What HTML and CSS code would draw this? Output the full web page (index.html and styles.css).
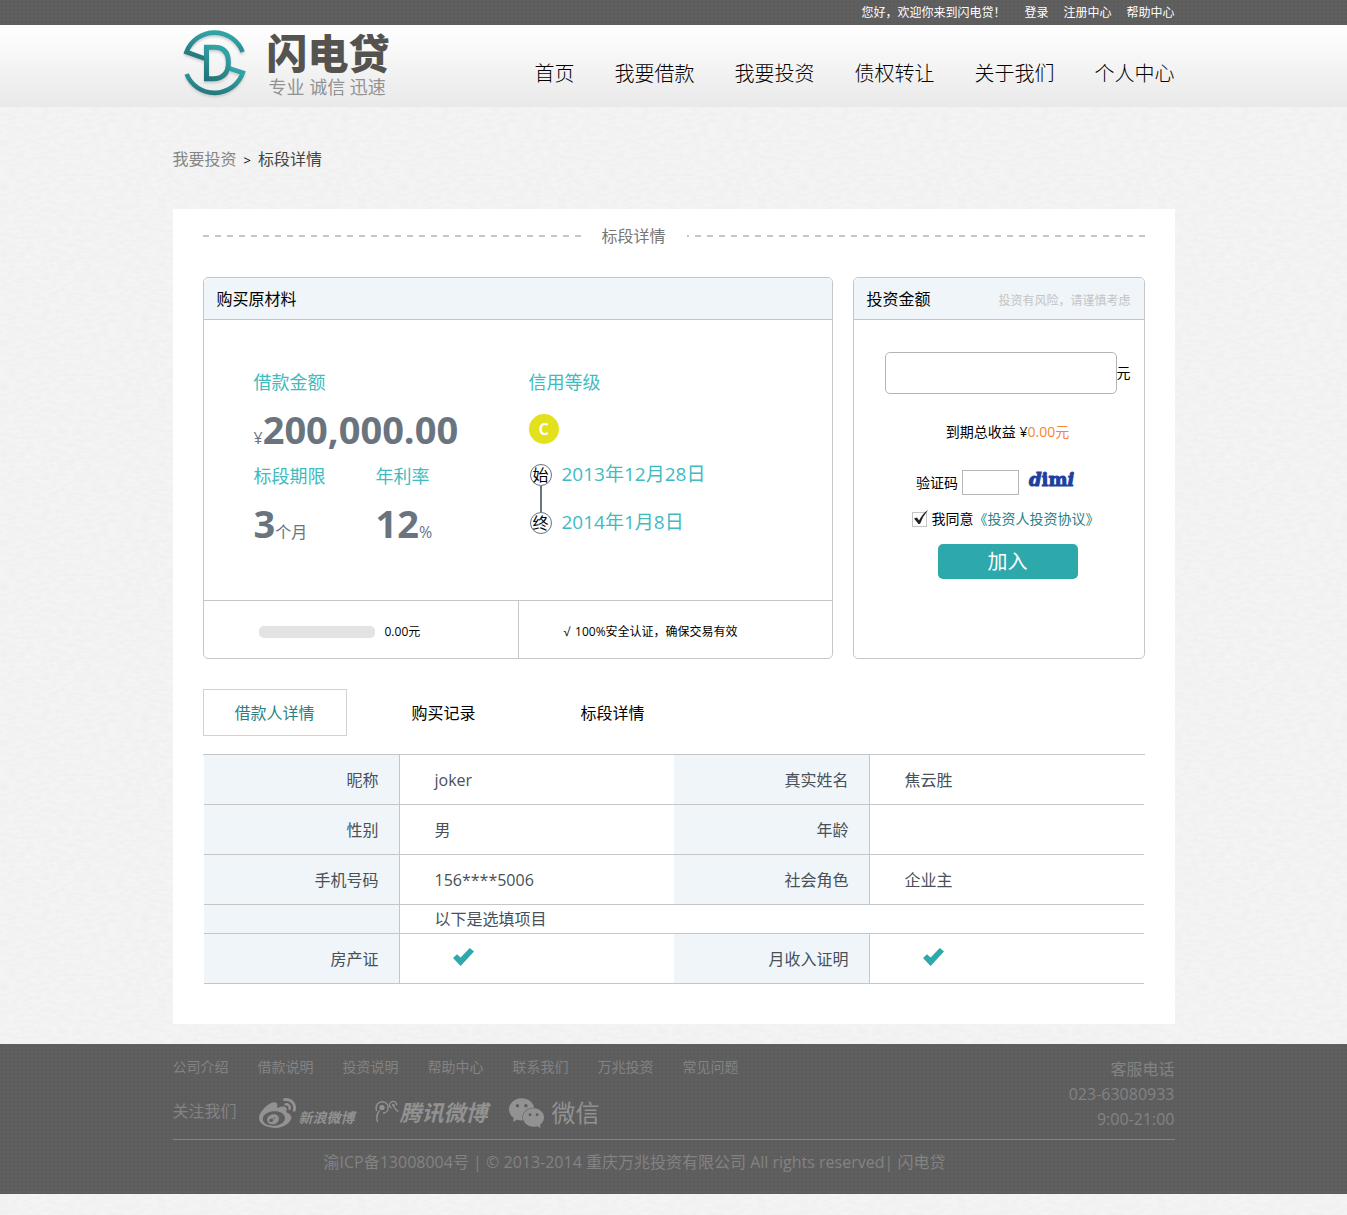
FILE: index.html
```html
<!DOCTYPE html>
<html lang="zh-CN">
<head>
<meta charset="utf-8">
<meta name="viewport" content="width=device-width, initial-scale=1">
<title>标段详情 - 闪电贷</title>
<link rel="stylesheet" href="styles.css">
</head>
<body>
<div class="topbar">
  <div class="container topbar-inner">
    <span class="greeting">您好，欢迎你来到闪电贷！</span>
    <a href="#">登录</a>
    <a href="#">注册中心</a>
    <a href="#">帮助中心</a>
  </div>
</div>

<header class="header">
  <div class="container header-inner">
    <a class="logo" href="#">
      <svg class="logo-mark" width="68" height="72" viewBox="0 0 68 72" aria-hidden="true">
        <defs>
          <linearGradient id="teal" x1="0" y1="1" x2="0.4" y2="0">
            <stop offset="0" stop-color="#237478"/>
            <stop offset="1" stop-color="#31a3a6"/>
          </linearGradient>
        </defs>
        <g fill="none" stroke="url(#teal)" stroke-width="4.6">
          <path d="M23 29.600 L4.500 23 A30 30 0 0 1 60.600 23"/>
          <path d="M46 39 L60.800 43.800 A30 30 0 0 1 4.600 45"/>
          <path d="M24.500 18.300 H32 C42 18.300 46.400 24 46.400 33.500 C46.400 44 41 49.800 31 49.800 H24.500 Z" stroke-width="5"/>
        </g>
      </svg>
      <span class="logo-text">
        <strong>闪电贷</strong>
        <span>专业 诚信 迅速</span>
      </span>
    </a>
    <nav class="nav">
      <a href="#">首页</a>
      <a href="#">我要借款</a>
      <a href="#">我要投资</a>
      <a href="#">债权转让</a>
      <a href="#">关于我们</a>
      <a href="#">个人中心</a>
    </nav>
  </div>
</header>

<main class="container">
  <div class="breadcrumb">
    <a href="#">我要投资</a><span class="sep">&gt;</span><span>标段详情</span>
  </div>

  <section class="panel">
    <h1 class="panel-title"><span>标段详情</span></h1>

    <div class="cards">
      <section class="card">
        <h2 class="card-head">购买原材料</h2>
        <div class="loan">
          <div class="loan-figures">
            <div class="figure wide">
              <div class="label">借款金额</div>
              <div class="value">¥<b>200,000.00</b></div>
            </div>
            <div class="figure">
              <div class="label">标段期限</div>
              <div class="value"><b>3</b>个月</div>
            </div>
            <div class="figure">
              <div class="label">年利率</div>
              <div class="value"><b>12</b>%</div>
            </div>
          </div>
          <div class="loan-credit">
            <div class="label">信用等级</div>
            <div class="grade-row"><span class="grade">C</span></div>
            <ol class="timeline">
              <li><span class="dot">始</span><span class="date">2013年12月28日</span></li>
              <li><span class="dot">终</span><span class="date">2014年1月8日</span></li>
            </ol>
          </div>
        </div>
        <div class="card-foot">
          <div class="foot-cell"><span class="bar"></span><span>0.00元</span></div>
          <div class="foot-cell safe"><span>√</span><span>100%安全认证，确保交易有效</span></div>
        </div>
      </section>

      <section class="card">
        <h2 class="card-head">投资金额<small>投资有风险，请谨慎考虑</small></h2>
        <form class="invest">
          <div class="amount-row">
            <input class="amount" id="amount" type="text" aria-label="投资金额"><label for="amount">元</label>
          </div>
          <p class="income">到期总收益 ¥<em>0.00元</em></p>
          <div class="code-row">
            <label for="code">验证码</label>
            <input class="code" id="code" type="text">
            <span class="captcha"><i>d</i>im<i>i</i></span>
          </div>
          <div class="agree-row">
            <input id="agree" type="checkbox" checked>
            <label for="agree">我同意<a href="#">《投资人投资协议》</a></label>
          </div>
          <button class="join" type="button">加入</button>
        </form>
      </section>
    </div>

    <div class="tabs">
      <button class="tab active" type="button">借款人详情</button>
      <button class="tab" type="button">购买记录</button>
      <button class="tab" type="button">标段详情</button>
    </div>

    <div class="details">
      <table>
        <tr><th scope="row">昵称</th><td>joker</td><th scope="row">真实姓名</th><td>焦云胜</td></tr>
        <tr><th scope="row">性别</th><td>男</td><th scope="row">年龄</th><td></td></tr>
        <tr><th scope="row">手机号码</th><td>156****5006</td><th scope="row">社会角色</th><td>企业主</td></tr>
        <tr class="note"><th></th><td colspan="3">以下是选填项目</td></tr>
        <tr>
          <th scope="row">房产证</th>
          <td class="tick"><svg width="21" height="18" viewBox="0 0 21 18" role="img" aria-label="已提供"><path d="M0 10 L4 6.200 L7.600 9.400 L16.800 0 L21 3.600 L7.600 18 Z"/></svg></td>
          <th scope="row">月收入证明</th>
          <td class="tick"><svg width="21" height="18" viewBox="0 0 21 18" role="img" aria-label="已提供"><path d="M0 10 L4 6.200 L7.600 9.400 L16.800 0 L21 3.600 L7.600 18 Z"/></svg></td>
        </tr>
      </table>
    </div>
  </section>
</main>

<footer class="footer">
  <div class="container">
    <div class="footer-main">
      <div>
        <nav class="footer-links">
          <a href="#">公司介绍</a>
          <a href="#">借款说明</a>
          <a href="#">投资说明</a>
          <a href="#">帮助中心</a>
          <a href="#">联系我们</a>
          <a href="#">万兆投资</a>
          <a href="#">常见问题</a>
        </nav>
        <div class="follow">
          <span class="follow-label">关注我们</span>
          <a class="sina" href="#">
            <svg width="37" height="30" viewBox="0 2.200 24 19.600" preserveAspectRatio="none" aria-hidden="true"><path d="M10.098 20.323c-3.977.391-7.414-1.406-7.672-4.020-.259-2.609 2.759-5.047 6.740-5.441 3.979-.394 7.413 1.404 7.671 4.018.259 2.600-2.759 5.049-6.737 5.439l-.002.004zM9.050 17.219c-.384.616-1.208.884-1.829.602-.612-.279-.793-.991-.406-1.593.379-.595 1.176-.861 1.793-.601.622.263.820.972.442 1.592zm1.270-1.627c-.141.237-.449.353-.689.253-.236-.090-.313-.361-.177-.586.138-.227.436-.346.672-.240.239.090.315.360.180.601l.014-.028zm.176-2.719c-1.893-.493-4.033.450-4.857 2.118-.836 1.704-.026 3.591 1.886 4.210 1.983.640 4.318-.341 5.132-2.179.800-1.793-.201-3.642-2.161-4.149zm7.563-1.224c-.346-.105-.570-.180-.405-.615.375-.977.420-1.804 0-2.404-.781-1.112-2.915-1.053-5.364-.030 0 0-.766.331-.571-.271.376-1.217.315-2.224-.270-2.809-1.338-1.337-4.869.045-7.888 3.080C1.309 10.870 0 13.273 0 15.348c0 3.981 5.099 6.395 10.086 6.395 6.536 0 10.888-3.801 10.888-6.820 0-1.822-1.547-2.854-2.915-3.284v.010zm1.908-5.092c-.766-.856-1.908-1.187-2.960-.962-.436.090-.706.511-.616.932.090.420.511.691.932.602.511-.105 1.067.044 1.442.465.376.421.466.977.316 1.473-.136.406.089.856.510.992.405.119.857-.105.992-.512.330-1.021.120-2.178-.646-3.035l.030.045zm2.418-2.195c-1.576-1.757-3.905-2.419-6.054-1.968-.496.104-.812.587-.706 1.081.104.496.586.813 1.082.707 1.532-.331 3.185.150 4.296 1.383 1.112 1.246 1.429 2.943.947 4.416-.165.480.106 1.007.586 1.157.479.165.991-.104 1.157-.586.675-2.088.241-4.478-1.338-6.235l.030.045z"/></svg>
            <span>新浪微博</span>
          </a>
          <a class="tencent" href="#">
            <svg width="24" height="24" viewBox="0 0 24 24" aria-hidden="true">
              <g fill="none" stroke="currentColor" stroke-width="1.400">
                <path d="M2.500 22 C1.200 18 1.600 14 4.500 10.500"/>
                <path d="M1.500 11 C0 5 3.500 1.500 7.500 1.700 C15 2.200 15 13 8 13.200"/>
                <path d="M16.500 8 A3.500 3.500 0 1 1 21.500 5.500 M18.500 5 Q19.500 9.500 23.500 11.500" stroke-width="1.200"/>
              </g>
              <circle cx="7" cy="7.500" r="2.600"/>
              <circle cx="18.300" cy="5" r="1.300"/>
            </svg>
            <span>腾讯微博</span>
          </a>
          <a class="wechat" href="#">
            <svg width="35" height="30" viewBox="0 2.100 24 19.800" preserveAspectRatio="none" aria-hidden="true"><path d="M8.691 2.188C3.891 2.188 0 5.476 0 9.530c0 2.212 1.170 4.203 3.002 5.550a.590.590 0 0 1 .213.665l-.390 1.480c-.019.070-.048.141-.048.213 0 .163.130.295.290.295a.326.326 0 0 0 .167-.054l1.903-1.114a.864.864 0 0 1 .717-.098 10.160 10.160 0 0 0 2.837.403c.276 0 .543-.027.811-.050-.857-2.578.157-4.972 1.932-6.446 1.703-1.415 3.882-1.980 5.853-1.838-.576-3.583-4.196-6.348-8.596-6.348zM5.785 5.991c.642 0 1.162.529 1.162 1.180a1.170 1.170 0 0 1-1.162 1.178A1.170 1.170 0 0 1 4.623 7.170c0-.651.520-1.180 1.162-1.180zm5.813 0c.642 0 1.162.529 1.162 1.180a1.170 1.170 0 0 1-1.162 1.178 1.170 1.170 0 0 1-1.162-1.178c0-.651.520-1.180 1.162-1.180zm5.340 2.867c-1.797-.052-3.746.512-5.280 1.786-1.720 1.428-2.687 3.720-1.780 6.220.942 2.453 3.666 4.229 6.884 4.229.826 0 1.622-.120 2.361-.336a.722.722 0 0 1 .598.082l1.584.926a.272.272 0 0 0 .140.047c.134 0 .240-.111.240-.247 0-.060-.023-.120-.038-.177l-.327-1.233a.582.582 0 0 1-.023-.156.490.490 0 0 1 .201-.398C23.024 18.480 24 16.820 24 14.980c0-3.210-2.931-5.837-6.656-6.088V8.890c-.135-.010-.270-.027-.407-.030zm-2.530 3.274c.535 0 .969.440.969.982a.976.976 0 0 1-.969.983.976.976 0 0 1-.969-.983c0-.542.434-.982.970-.982zm4.844 0c.535 0 .969.440.969.982a.976.976 0 0 1-.969.983.976.976 0 0 1-.969-.983c0-.542.434-.982.969-.982z"/></svg>
            <span>微信</span>
          </a>
        </div>
      </div>
      <div class="service">
        <div>客服电话</div>
        <div>023-63080933</div>
        <div>9:00-21:00</div>
      </div>
    </div>
    <p class="copyright">渝ICP备13008004号 | © 2013-2014 重庆万兆投资有限公司 All rights reserved| 闪电贷</p>
  </div>
</footer>
</body>
</html>
```
FILE: styles.css
```css
* { box-sizing: border-box; }

body {
  margin: 0;
  color: #000;
  font-family: "Open Sans", "Noto Sans CJK SC", sans-serif;
  font-size: 16px;
  line-height: 24px;
  background-color: #f4f4f4;
  background-image: url("data:image/svg+xml,%3Csvg xmlns='http://www.w3.org/2000/svg' width='200' height='200'%3E%3Cfilter id='n' x='0' y='0' width='100%25' height='100%25'%3E%3CfeTurbulence type='fractalNoise' baseFrequency='.12 .3' numOctaves='3' stitchTiles='stitch'/%3E%3CfeColorMatrix values='0 0 0 0 .4 0 0 0 0 .4 0 0 0 0 .4 .14 0 0 0 -.05'/%3E%3C/filter%3E%3Crect width='200' height='200' filter='url(%23n)'/%3E%3C/svg%3E");
}

a { color: inherit; text-decoration: none; }
h1, h2, p, ol { margin: 0; padding: 0; font-weight: 400; }
button, input { margin: 0; padding: 0; font: inherit; }
svg { display: block; fill: currentColor; }

.container { max-width: 1002px; margin: 0 auto; }

/* top bar and header */
.topbar, .footer {
  background-color: #5f5f5f;
  background-image: radial-gradient(#5b5b5b 1px, transparent 1px);
  background-size: 4px 4px;
}
.topbar-inner {
  display: flex;
  justify-content: flex-end;
  gap: 15px;
  color: #fff;
  font-size: 12px;
  line-height: 25px;
}
.greeting { margin-right: 4px; }

.header { background: linear-gradient(#fff, #e9e9e9); }
.header-inner {
  display: flex;
  justify-content: space-between;
  height: 82px;
}
.logo { display: flex; gap: 17px; padding: 4px 0 0 9px; }
.logo-mark { filter: drop-shadow(0 2px 1px #cccccc); }
.logo-text { display: flex; flex-direction: column; padding-top: 2px; }
.logo-text strong { color: #555350; font-size: 41px; font-weight: 900; line-height: 44px; }
.logo-text span { color: #929292; font-size: 18px; line-height: 24px; padding-left: 2px; }
.nav { display: flex; gap: 40px; font-size: 20px; font-weight: 300; line-height: 30px; padding-top: 34px; }

.breadcrumb { padding: 40px 0 37px; color: #444; }
.breadcrumb a { color: #858585; }
.sep { margin: 0 7px; color: #000; font-size: 13px; }

/* main panel */
.panel { padding: 15px 30px 40px; background: #fff; }
.panel-title {
  display: flex;
  align-items: center;
  gap: 21px;
  color: #777;
  font-size: 16px;
}
.panel-title::before, .panel-title::after {
  content: "";
  height: 2px;
  background: repeating-linear-gradient(90deg, #c6c6c6 0 6px, transparent 6px 12px);
}
.panel-title::before { flex: 378; }
.panel-title::after {
  flex: 458;
  background: repeating-linear-gradient(270deg, #c6c6c6 0 6px, transparent 6px 12px);
}

.cards { display: grid; grid-template-columns: 630fr 292fr; gap: 20px; padding-top: 29px; }
.card {
  display: flex;
  flex-direction: column;
  border: 1px solid #c6c6c6;
  border-radius: 5px;
  overflow: hidden;
}
.card-head {
  display: flex;
  justify-content: space-between;
  height: 42px;
  padding: 0 13px;
  border-bottom: 1px solid #c6c6c6;
  background: #eff5f8;
  font-size: 16px;
  line-height: 42px;
}
.card-head small { color: #c4c4c4; font-size: 12px; line-height: 46px; }

.loan { display: grid; grid-template-columns: 275px 1fr; padding: 39px 50px 53px; }
.loan-figures { display: grid; grid-template-columns: 122px 1fr; }
.wide { grid-column: 1 / -1; }
.label { color: #41bbc0; font-size: 18px; line-height: 47px; }
.value { height: 47px; color: #69747f; line-height: 46px; }
.value b { font-size: 38px; }
.grade-row { display: flex; align-items: center; height: 45px; }
.grade {
  width: 30px;
  border-radius: 50%;
  background: #e3e01c;
  color: #fff;
  font-weight: 700;
  line-height: 30px;
  text-align: center;
}
.timeline { list-style: none; color: #41bbc0; font-size: 19px; }
.timeline li { display: flex; align-items: center; gap: 10px; height: 48px; padding-left: 1px; }
.date { padding-bottom: 3px; }
.dot {
  position: relative;
  width: 22px;
  height: 22px;
  border: 1px solid #69747f;
  border-radius: 50%;
  color: #000;
  font-size: 16px;
  line-height: 20px;
  text-align: center;
}
.timeline li:first-child .dot::after {
  content: "";
  position: absolute;
  top: 21px;
  left: 9px;
  width: 2px;
  height: 26px;
  background: #69747f;
}

.card-foot {
  display: grid;
  grid-template-columns: 1fr 1fr;
  border-top: 1px solid #c6c6c6;
  font-size: 12px;
}
.foot-cell { display: flex; align-items: center; gap: 10px; height: 57px; padding: 4px 0 0 55px; }
.safe { gap: 5px; padding-left: 45px; border-left: 1px solid #c6c6c6; }
.bar { width: 116px; height: 12px; border-radius: 5px; background: #e3e3e3; }

/* investment form */
.invest {
  display: flex;
  flex-direction: column;
  align-items: center;
  padding: 32px 0 0 18px;
  font-size: 14px;
}
.amount-row, .code-row, .agree-row { display: flex; align-items: center; }
.amount { width: 232px; height: 42px; border: 1px solid #b0b5b8; border-radius: 5px; }
.income { margin: 26px 0; }
.income em { color: #f58632; font-style: normal; }
.code { width: 57px; height: 25px; margin: 0 10px 0 4px; border: 1px solid #b5b8bb; }
.captcha {
  align-self: flex-start;
  width: 70px;
  color: #1f3f9f;
  font-family: "DejaVu Serif", serif;
  font-size: 18px;
  font-weight: 700;
  line-height: 20px;
  -webkit-text-stroke: 1px #1f3f9f;
}
.agree-row { gap: 4px; margin: 12px 4px 13px 0; }
.agree-row input {
  appearance: none;
  width: 16px;
  height: 18px;
  background: url("data:image/svg+xml,%3Csvg xmlns='http://www.w3.org/2000/svg' width='16' height='18'%3E%3Crect x='.5' y='2.500' width='14' height='14' fill='%23fff' stroke='%23c6c6c6'/%3E%3C/svg%3E");
}
.agree-row input:checked {
  background: url("data:image/svg+xml,%3Csvg xmlns='http://www.w3.org/2000/svg' width='16' height='18'%3E%3Crect x='.5' y='2.500' width='14' height='14' fill='%23fff' stroke='%23c6c6c6'/%3E%3Cpath d='M2 8.500 5 7.500 7 10.500Q11 3 16 0 11 6 8 14H6.500Z' fill='%23222'/%3E%3C/svg%3E");
}
.agree-row a { color: #2a7f86; }
.join {
  width: 140px;
  height: 35px;
  border: 0;
  border-radius: 5px;
  background: #2da8ab;
  color: #fff;
  font-size: 20px;
  line-height: 35px;
}

/* borrower details */
.tabs { display: flex; gap: 25px; padding: 30px 0 18px; }
.tab { width: 144px; height: 47px; border: 1px solid transparent; background: none; color: #000; }
.active { border-color: #d0d2d4; color: #2a7f86; }

.details { padding: 0 1px; border-top: 1px solid #c6c6c6; }
table { width: 100%; table-layout: fixed; border-spacing: 0; color: #485058; }
th, td { height: 50px; padding: 0; border-bottom: 1px solid #c6c6c6; font-weight: 400; }
th { width: 196px; padding-right: 20px; border-right: 1px solid #c6c6c6; background: #eff5f8; text-align: right; }
td { padding-left: 35px; }
.note th, .note td { height: 29px; }
.tick { padding: 0 0 4px 53px; color: #2da8ab; }

/* footer */
.footer { margin: 20px 0 21px; color: #838383; }
.footer-main {
  display: flex;
  justify-content: space-between;
  height: 96px;
  border-bottom: 1px solid #838383;
}
.footer-links { display: flex; gap: 29px; padding-top: 11px; font-size: 14px; }
.follow { display: flex; align-items: center; height: 30px; margin-top: 19px; }
.follow-label { padding-bottom: 4px; }
.follow a { display: flex; align-items: center; color: #929292; }
.sina { gap: 3px; margin-left: 22px; font-size: 14px; font-style: italic; font-weight: 700; }
.sina span { padding-top: 9px; }
.follow .tencent { gap: 1px; margin-left: 20px; padding-bottom: 3px; font-size: 22px; font-style: italic; font-weight: 700; }
.wechat { gap: 8px; margin-left: 21px; font-size: 24px; }
.service { padding-top: 13px; line-height: 25px; text-align: right; }
.copyright { padding: 10px 78px 20px 0; text-align: center; }
```
